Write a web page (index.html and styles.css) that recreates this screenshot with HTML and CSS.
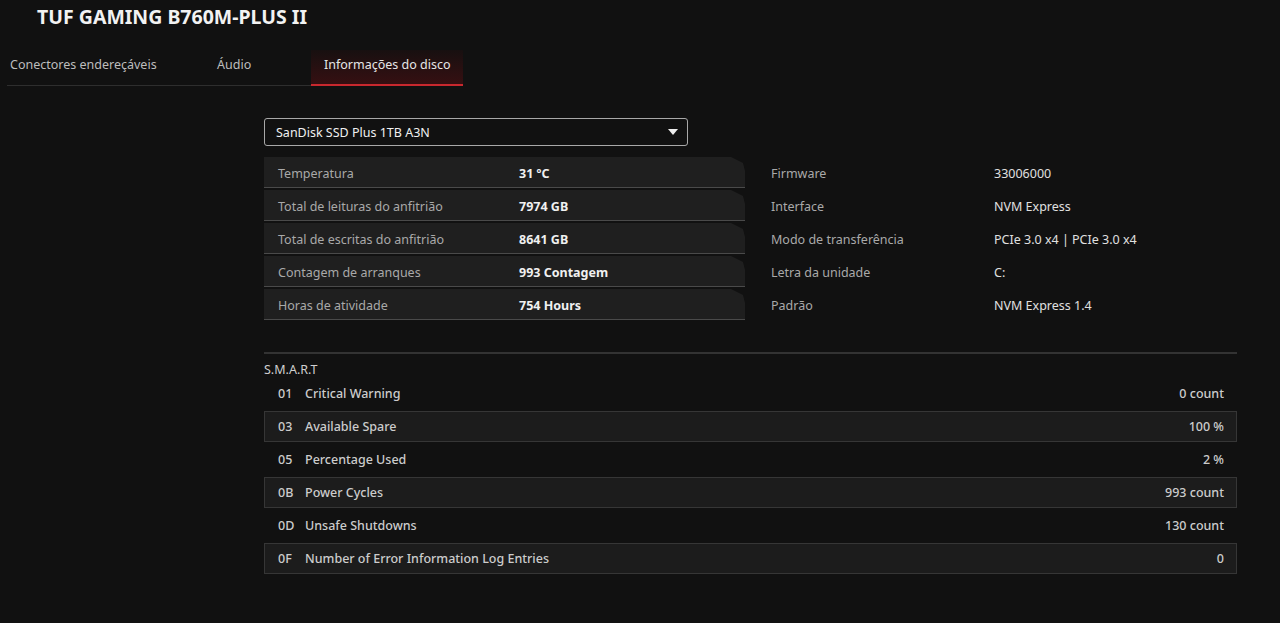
FILE: index.html
```html
<!DOCTYPE html>
<html lang="pt">
  <head>
    <meta charset="UTF-8" />
    <title>TUF GAMING B760M-PLUS II</title>
    <link rel="stylesheet" href="styles.css">
  </head>
  <body>
    <h1 class="board-title">TUF GAMING B760M-PLUS II</h1>

    <div class="tabs">
      <div class="tab tab-first">Conectores endereçáveis</div>
      <div class="tab tab-second">Áudio</div>
      <div class="tab tab-active">Informações do disco</div>
    </div>

    <div class="content">
      <div class="disk-select">
        <span>SanDisk SSD Plus 1TB A3N</span>
        <svg class="caret" width="10" height="6" viewBox="0 0 10 6"><path d="M0 0 H10 L5 6 Z" fill="#eee"/></svg>
      </div>

      <div class="info">
        <div class="info-left">
          <div class="info-row"><span class="info-label">Temperatura</span><span class="info-value">31 ºC</span></div>
          <div class="info-row"><span class="info-label">Total de leituras do anfitrião</span><span class="info-value">7974 GB</span></div>
          <div class="info-row"><span class="info-label">Total de escritas do anfitrião</span><span class="info-value">8641 GB</span></div>
          <div class="info-row"><span class="info-label">Contagem de arranques</span><span class="info-value">993 Contagem</span></div>
          <div class="info-row"><span class="info-label">Horas de atividade</span><span class="info-value">754 Hours</span></div>
        </div>
        <div class="info-right">
          <div class="spec-row"><span class="spec-label">Firmware</span><span class="spec-value">33006000</span></div>
          <div class="spec-row"><span class="spec-label">Interface</span><span class="spec-value">NVM Express</span></div>
          <div class="spec-row"><span class="spec-label">Modo de transferência</span><span class="spec-value">PCIe 3.0 x4 | PCIe 3.0 x4</span></div>
          <div class="spec-row"><span class="spec-label">Letra da unidade</span><span class="spec-value">C:</span></div>
          <div class="spec-row"><span class="spec-label">Padrão</span><span class="spec-value">NVM Express 1.4</span></div>
        </div>
      </div>

      <div class="smart">
        <div class="smart-title">S.M.A.R.T</div>
        <div class="smart-row"><span class="smart-id">01</span><span class="smart-name">Critical Warning</span><span class="smart-value">0 count</span></div>
        <div class="smart-row shaded"><span class="smart-id">03</span><span class="smart-name">Available Spare</span><span class="smart-value">100 %</span></div>
        <div class="smart-row"><span class="smart-id">05</span><span class="smart-name">Percentage Used</span><span class="smart-value">2 %</span></div>
        <div class="smart-row shaded"><span class="smart-id">0B</span><span class="smart-name">Power Cycles</span><span class="smart-value">993 count</span></div>
        <div class="smart-row"><span class="smart-id">0D</span><span class="smart-name">Unsafe Shutdowns</span><span class="smart-value">130 count</span></div>
        <div class="smart-row shaded"><span class="smart-id">0F</span><span class="smart-name">Number of Error Information Log Entries</span><span class="smart-value">0</span></div>
      </div>
    </div>
  </body>
</html>
```

FILE: styles.css
```css
/* Global */
body {
  margin: 0;
  background-color: #111111;
  color: #cccccc;
  font-family: "Noto Sans", "Open Sans", sans-serif;
  font-size: 12.5px;
}

.board-title {
  margin: 0;
  padding: 4px 0 0 37px;
  height: 31px;
  font-size: 19.5px;
  font-weight: 700;
  color: #f2f2f2;
  line-height: 26px;
}

/* Tabs */
.tabs {
  display: flex;
  margin: 15px 0 0 7px;
}

.tab {
  height: 36px;
  line-height: 30px;
  color: #bdbdbd;
  border-bottom: 1px solid #2e2e2e;
  box-sizing: border-box;
}

.tab-first {
  width: 193px;
  padding-left: 3px;
}

.tab-second {
  width: 111px;
  padding-left: 17px;
}

.tab-active {
  width: 152px;
  padding-left: 13px;
  color: #e6e6e6;
  background: linear-gradient(to bottom, rgba(60, 10, 12, 0.15), rgba(90, 14, 18, 0.5));
  border-bottom: 2px solid #c8282e;
}

/* Content */
.content {
  margin: 32px 0 0 264px;
  width: 973px;
}

.disk-select {
  width: 424px;
  height: 28px;
  box-sizing: border-box;
  border: 1px solid #a8a8a8;
  border-radius: 3px;
  display: flex;
  align-items: center;
  justify-content: space-between;
  padding: 0 9px 0 11px;
  color: #f0f0f0;
}

.info {
  display: flex;
  margin-top: 11px;
}

.info-left {
  width: 481px;
}

.info-row {
  display: flex;
  align-items: center;
  height: 31px;
  margin-bottom: 2px;
  padding: 2px 0 0 14px;
  background-color: #1f1f1f;
  border-bottom: 1px solid #4a4a4a;
  box-sizing: border-box;
  clip-path: polygon(0 0, calc(100% - 14px) 0, calc(100% - 2px) 6px, 100% 14px, 100% 100%, 0 100%);
}

.info-label {
  width: 241px;
  color: #a9a9a9;
}

.info-value {
  font-weight: 700;
  color: #f0f0f0;
}

.info-right {
  padding-left: 26px;
}

.spec-row {
  display: flex;
  align-items: center;
  height: 33px;
}

.spec-label {
  width: 223px;
  color: #a9a9a9;
}

.spec-value {
  color: #e0e0e0;
}

/* S.M.A.R.T */
.smart {
  margin-top: 30px;
  border-top: 2px solid #333333;
}

.smart-title {
  margin-top: 8px;
  line-height: 16px;
  color: #cfcfcf;
}

.smart-row {
  display: flex;
  align-items: center;
  height: 31px;
  margin-bottom: 2px;
  padding: 0 12px 0 13px;
  border: 1px solid transparent;
  box-sizing: border-box;
  font-weight: 500;
  color: #cccccc;
}

.smart-row.shaded {
  background-color: #1c1c1c;
  border-color: #363636;
}

.smart-id {
  width: 27px;
}

.smart-name {
  flex: 1;
}
```
